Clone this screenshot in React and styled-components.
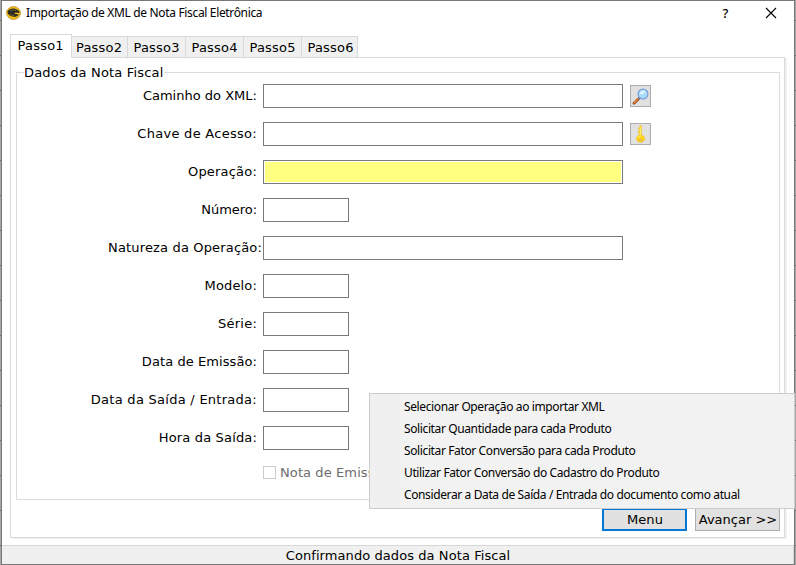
import React from 'react';
import styled, { createGlobalStyle } from 'styled-components';

const GlobalStyle = createGlobalStyle`
  *, *::before, *::after { box-sizing: border-box; }
  body { margin: 0; overflow: hidden; background: #a0a0a0; }
`;

const uiFont = '"DejaVu Sans", Verdana, sans-serif';
const systemFont = '"Noto Sans", "Segoe UI", sans-serif';

const Desktop = styled.div`
  width: 796px;
  height: 565px;
  padding: 0 1px;
  background: repeating-linear-gradient(#a5a5a5 0 34px, #707070 34px 35px) 0 -14px / 100% 595px;
  font: 13px/16px ${uiFont};
  color: #000;
`;

const Window = styled.div`
  position: relative;
  display: flex;
  flex-direction: column;
  height: 565px;
  border: 1px solid #787878;
  background: #fff;
`;

const TitleBar = styled.header`
  display: flex;
  align-items: center;
  height: 24px;
  flex: none;
  padding: 0 1px 0 4px;
  font: 12px/16px ${systemFont};
`;

const WindowTitle = styled.span`
  flex: 1;
  margin-left: 5px;
  letter-spacing: -0.34px;
  white-space: nowrap;
`;

const CaptionButton = styled.span`
  display: flex;
  align-items: center;
  justify-content: center;
  width: 45px;
  height: 24px;
  font-size: 13px;
  font-weight: 500;
`;

const Text = styled.span`
  letter-spacing: ${p => p.$track || 0}px;
  white-space: nowrap;
`;

const Tabs = styled.nav`
  display: flex;
  align-items: flex-end;
  flex: none;
  height: 24px;
  margin: 9px 0 -1px 8px;
  z-index: 1;
`;

const Tab = styled.div`
  height: ${p => (p.$active ? 24 : 22)}px;
  width: ${p => p.$width}px;
  padding: 3px 0 0 ${p => p.$inset}px;
  border: 1px solid #d9d9d9;
  border-left-width: ${p => (p.$active ? 1 : 0)}px;
  border-bottom-color: ${p => (p.$active ? '#fff' : '#d9d9d9')};
  background: ${p => (p.$active ? '#fff' : '#f0f0f0')};
`;

const Pane = styled.main`
  display: flex;
  flex-direction: column;
  flex: none;
  width: 775px;
  height: 481px;
  margin-left: 8px;
  padding: 14px 4px 6px 5px;
  border: 1px solid #d9d9d9;
  box-shadow: 2px 1px 0 #f0f0f0;
`;

const Group = styled.section`
  flex: none;
  height: 428px;
  border: 1px solid #dcdcdc;
`;

const Legend = styled.div`
  width: fit-content;
  height: 16px;
  margin: -8px 0 -4px 7px;
  background: #fff;
`;

const Row = styled.div`
  display: flex;
  align-items: center;
  height: 38px;
`;

const Label = styled.label`
  width: 246px;
  padding-right: ${p => (p.$wide ? 1 : 6)}px;
  text-align: right;
`;

const Field = styled.div`
  width: ${p => (p.$short ? 86 : 360)}px;
  height: 24px;
  border: 1px solid #7a7a7a;
  padding: 1px;
  background: ${p => (p.$required ? '#ffff80' : '#fff')} content-box;
`;

const IconButton = styled.button`
  display: flex;
  align-items: center;
  justify-content: center;
  width: 21px;
  height: 22px;
  margin-left: 7px;
  padding: 0;
  border: 1px solid #adadad;
  background: #e1e1e1;
`;

const CheckRow = styled.div`
  display: flex;
  align-items: center;
  gap: 4px;
  height: 31px;
  padding-left: 246px;
  color: #6d6d6d;
`;

const CheckBox = styled.span`
  width: 13px;
  height: 13px;
  border: 1px solid #ccc;
`;

const Actions = styled.footer`
  display: flex;
  justify-content: flex-end;
  gap: 8px;
  margin-top: auto;
`;

const ActionButton = styled.button`
  width: 85px;
  height: 23px;
  padding: 0 0 0 1px;
  border: ${p => (p.$focused ? '2px solid #0078d7' : '1px solid #adadad')};
  background: #e1e1e1;
  color: #000;
  font: 13px/16px ${uiFont};
`;

const StatusBar = styled.div`
  display: flex;
  justify-content: center;
  height: 19px;
  margin-top: auto;
  padding: 2px 0 0 1px;
  border-top: 1px solid #d7d7d7;
  border-right: 1px solid #d7d7d7;
  background: #f0f0f0;
`;

const PopupMenu = styled.ul`
  position: absolute;
  left: 367px;
  top: 392px;
  width: 426px;
  height: 116px;
  margin: 0;
  padding: 2px 0 2px 34px;
  border: 1px solid #ccc;
  background: linear-gradient(90deg, #f0f0f0 30px, #f2f2f2 30px);
  list-style: none;
  font: 12px/22px ${systemFont};
  z-index: 2;
`;

const MenuItem = styled.li`
  height: 22px;
  letter-spacing: -0.38px;
  white-space: nowrap;
`;

const AppLogo = () => (
  <svg width="15" height="14" viewBox="0 0 15 14">
    <ellipse cx="7.5" cy="7" rx="7" ry="6.500" fill="#f3bd18" stroke="#a97c14" strokeWidth=".6" />
    <path d="M1.500 5.500C3 2.800 6.500 2 9.500 3c2 .7 3.300 1.600 4.200 3.200L12.500 7 9.800 6.400 8 7.600l3 .7 2 .2-1.600 1.400c-2 1.200-4.700 1.200-6.700.1C2.800 9 1.600 7.500 1.500 5.500Z" fill="#2c2820" />
    <path d="M4 4.600c1.800-.8 4-.8 6 .1M4 8.300c1.300.9 2.800 1.300 4.500 1" fill="none" stroke="#8d7a45" strokeWidth=".7" />
  </svg>
);

const CloseGlyph = () => (
  <svg width="12" height="12" viewBox="0 0 12 12">
    <path d="M1 1l10 10M11 1L1 11" stroke="#000" strokeWidth="1.100" />
  </svg>
);

const Magnifier = () => (
  <svg width="17" height="17" viewBox="0 0 17 17">
    <path d="M2 15.300L6.300 11" stroke="#8a4a22" strokeWidth="2.800" strokeLinecap="round" />
    <path d="M2 14.900L6 10.900" stroke="#e8873a" strokeWidth="1.500" strokeLinecap="round" />
    <path d="M6.500 10.800L8 9.300" stroke="#5c6f9c" strokeWidth="1.800" />
    <circle cx="11" cy="6" r="4.900" fill="#a9dcfa" stroke="#7b9edb" strokeWidth="1.200" />
    <path d="M7.700 6.200a3.400 3.400 0 0 1 5.600-2.500C12 5.700 10 6.300 7.700 6.200Z" fill="#e6f7ff" />
  </svg>
);

const Key = () => (
  <svg width="17" height="18" viewBox="0 0 17 18">
    <path d="M8 .8h1.300v9.200c2 .3 3.300 1.600 3.300 3.400 0 2.100-1.700 3.800-4 3.800s-4.100-1.700-4.100-3.800c0-1.700 1.200-3 2.900-3.400V7.500H6.300V6.200h1.200V4.700H6.600V3.300h.9Z" fill="#ffd91a" stroke="#eebc22" strokeWidth=".7" />
    <path d="M8.300 2v8.500M6.200 12.500c.4-.9 1.300-1.300 2.300-1.300" fill="none" stroke="#fff27a" strokeWidth="1" />
    <ellipse cx="8.600" cy="14.900" rx="1.600" ry=".8" fill="#f7efd0" stroke="#c98f12" strokeWidth=".6" />
  </svg>
);

const tabs = [
  { label: 'Passo1', width: 62, inset: 6.6, active: true },
  { label: 'Passo2', width: 56, inset: 4 },
  { label: 'Passo3', width: 58, inset: 5.5 },
  { label: 'Passo4', width: 58, inset: 5.5 },
  { label: 'Passo5', width: 58, inset: 5.5 },
  { label: 'Passo6', width: 56, inset: 5.5 },
];

const fields = [
  { label: 'Caminho do XML:', track: 0.01, icon: <Magnifier /> },
  { label: 'Chave de Acesso:', track: 0.28, icon: <Key /> },
  { label: 'Operação:', track: 0.2, required: true },
  { label: 'Número:', track: -0.05, short: true },
  { label: 'Natureza da Operação:', track: 0.16, wide: true },
  { label: 'Modelo:', track: 0.15, short: true },
  { label: 'Série:', track: 0.22, short: true },
  { label: 'Data de Emissão:', track: 0.08, short: true },
  { label: 'Data da Saída / Entrada:', track: 0.27, short: true },
  { label: 'Hora da Saída:', track: 0.16, short: true },
];

const menuItems = [
  'Selecionar Operação ao importar XML',
  'Solicitar Quantidade para cada Produto',
  'Solicitar Fator Conversão para cada Produto',
  'Utilizar Fator Conversão do Cadastro do Produto',
  'Considerar a Data de Saída / Entrada do documento como atual',
];

export default function App() {
  return (
    <Desktop>
      <GlobalStyle />
      <Window>
        <TitleBar>
          <AppLogo />
          <WindowTitle>Importação de XML de Nota Fiscal Eletrônica</WindowTitle>
          <CaptionButton>?</CaptionButton>
          <CaptionButton><CloseGlyph /></CaptionButton>
        </TitleBar>

        <Tabs>
          {tabs.map(t => (
            <Tab key={t.label} $active={t.active} $width={t.width} $inset={t.inset}>
              <Text $track={0.2}>{t.label}</Text>
            </Tab>
          ))}
        </Tabs>

        <Pane>
          <Group>
            <Legend><Text $track={0.18}>Dados da Nota Fiscal</Text></Legend>
            {fields.map(f => (
              <Row key={f.label}>
                <Label $wide={f.wide}><Text $track={f.track}>{f.label}</Text></Label>
                <Field $short={f.short} $required={f.required} />
                {f.icon && <IconButton>{f.icon}</IconButton>}
              </Row>
            ))}
            <CheckRow>
              <CheckBox />
              <Text $track={0.1}>Nota de Emissão</Text>
            </CheckRow>
          </Group>
          <Actions>
            <ActionButton $focused><Text $track={0.05}>Menu</Text></ActionButton>
            <ActionButton><Text $track={0}>Avançar &gt;&gt;</Text></ActionButton>
          </Actions>
        </Pane>

        <StatusBar><Text $track={0.08}>Confirmando dados da Nota Fiscal</Text></StatusBar>

        <PopupMenu>
          {menuItems.map(item => <MenuItem key={item}>{item}</MenuItem>)}
        </PopupMenu>
      </Window>
    </Desktop>
  );
}
